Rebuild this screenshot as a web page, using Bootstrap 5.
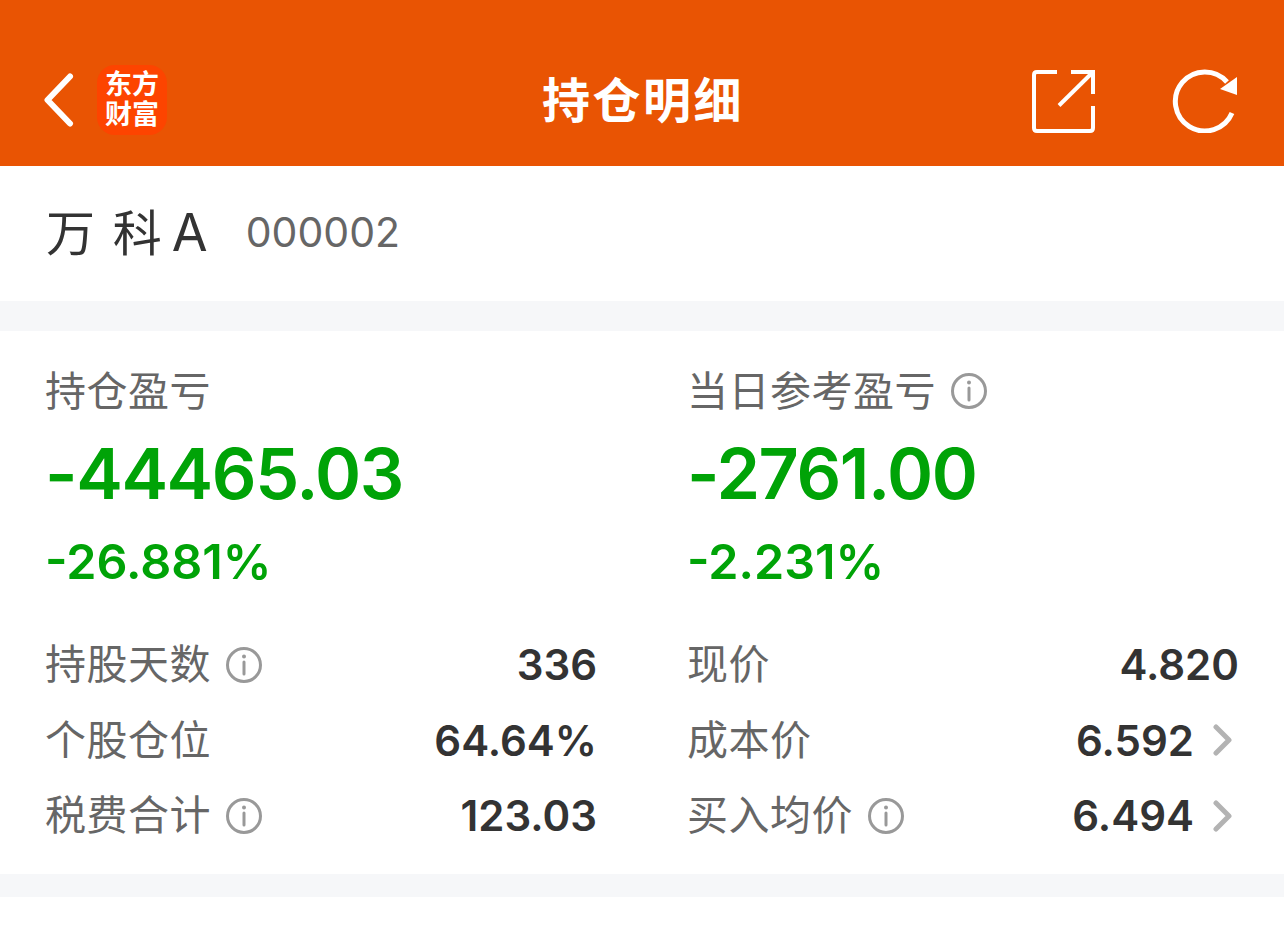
<!DOCTYPE html>
<html lang="zh-CN">
<head>
<meta charset="UTF-8">
<meta name="viewport" content="width=device-width, initial-scale=1.0">
<title>持仓明细</title>
<link href="https://cdn.jsdelivr.net/npm/bootstrap@5.3.0/dist/css/bootstrap.min.css" rel="stylesheet">
<style>
    body {
        background: #fff;
        font-family: Inter, "Noto Sans CJK SC", sans-serif;
        color: #333;
    }
    .top-bar {
        height: 166px;
        background: #e95403;
        padding: 36px 46px 0 44px;
        color: #fff;
    }
    .top-side { flex: 1 1 0; }
    .top-left { margin-bottom: 3px; }
    .top-title {
        font-size: 48px;
        line-height: 66px;
        font-weight: 700;
        letter-spacing: 2.5px;
        margin-left: 4px;
    }
    .logo-box {
        width: 70px;
        height: 70px;
        border-radius: 18px;
        background: #fd4400;
        margin-left: 23px;
        flex: none;
    }
    .logo-text {
        width: 54px;
        font-size: 27px;
        line-height: 30px;
        font-weight: 700;
        text-align: center;
    }
    .refresh-icon { margin-left: 77px; }
    .stock-row {
        height: 135px;
        padding: 0 46px 2px;
    }
    .stock-name { font-size: 49px; letter-spacing: 2px; color: #333; }
    .stock-letter { margin-left: 8px; font-size: 52px; }
    .stock-code { font-size: 41px; color: #666; margin-left: 36px; }
    .gap-band { background: #f6f7f9; }
    .gap-a { height: 30px; }
    .gap-b { height: 23px; }
    .pnl-block {
        height: 543px;
        padding: 34px 45px 0;
    }
    .pnl-left { width: 642px; flex: none; padding-right: 90px; }
    .pnl-right { flex: 1; }
    .pnl-label {
        font-size: 41px;
        line-height: 52px;
        letter-spacing: 0.5px;
        color: #666;
    }
    .pnl-value {
        font-size: 70px;
        line-height: 84px;
        font-weight: 600;
        color: #00a307;
        margin-top: 15px;
        letter-spacing: -1.4px;
    }
    .pnl-rate {
        font-size: 48.500px;
        line-height: 56px;
        font-weight: 600;
        color: #00a307;
        margin-top: 18px;
    }
    .stat-list { margin-top: 37px; }
    .stat-line {
        height: 75.500px;
        font-size: 41px;
        letter-spacing: 0.5px;
        color: #666;
    }
    .stat-num {
        font-size: 42px;
        font-weight: 600;
        letter-spacing: 0;
        color: #333;
    }
    .tip-icon { width: 36px; height: 36px; margin-left: 15px; flex: none; }
    .more-icon { width: 20px; height: 32px; margin: 0 6px 0 19px; flex: none; }
    .bottom-fill { height: 32px; }
</style>
</head>
<body>

<div class="top-bar d-flex align-items-center">
    <div class="top-side top-left d-flex align-items-center">
        <svg width="30" height="54" viewBox="0 0 30 54" fill="none" stroke="#fff" stroke-width="6" stroke-linecap="round" stroke-linejoin="round"><path d="M26 3.500 3.500 27 26 50.500"/></svg>
        <div class="logo-box d-flex align-items-center justify-content-center">
            <div class="logo-text">东方财富</div>
        </div>
    </div>
    <div class="top-title">持仓明细</div>
    <div class="top-side d-flex align-items-center justify-content-end">
        <svg width="64" height="64" viewBox="0 0 64 64" fill="none" stroke="#fff" stroke-width="4"><path d="M26 3H6Q3 3 3 6V59Q3 62 6 62H59Q62 62 62 59V37"/><path d="M40 3H62V25"/><path d="M28 36.500 62 3"/></svg>
        <svg class="refresh-icon" width="66" height="64" viewBox="0 0 66 64" fill="none"><path d="M60 44A29.500 29.500 0 1 1 55 13" stroke="#fff" stroke-width="5"/><path d="M65 8V26L48 20Z" fill="#fff"/></svg>
    </div>
</div>

<div class="stock-row d-flex align-items-center">
    <span class="stock-name">万 科<span class="stock-letter">A</span></span>
    <span class="stock-code">000002</span>
</div>

<div class="gap-band gap-a"></div>

<div class="pnl-block d-flex">
    <div class="pnl-left">
        <div class="pnl-label">持仓盈亏</div>
        <div class="pnl-value">-44465.03</div>
        <div class="pnl-rate">-26.881%</div>
        <div class="stat-list">
            <div class="stat-line d-flex align-items-center">
                <span>持股天数</span>
                <svg class="tip-icon" viewBox="0 0 36 36" fill="none" stroke="#999" stroke-width="3"><circle cx="18" cy="18" r="16.500"/><path d="M18 15V27" stroke-linecap="round"/><circle cx="18" cy="9.500" r="2" fill="#999" stroke="none"/></svg>
                <span class="stat-num ms-auto">336</span>
            </div>
            <div class="stat-line d-flex align-items-center">
                <span>个股仓位</span>
                <span class="stat-num ms-auto">64.64%</span>
            </div>
            <div class="stat-line d-flex align-items-center">
                <span>税费合计</span>
                <svg class="tip-icon" viewBox="0 0 36 36" fill="none" stroke="#999" stroke-width="3"><circle cx="18" cy="18" r="16.500"/><path d="M18 15V27" stroke-linecap="round"/><circle cx="18" cy="9.500" r="2" fill="#999" stroke="none"/></svg>
                <span class="stat-num ms-auto">123.03</span>
            </div>
        </div>
    </div>
    <div class="pnl-right">
        <div class="pnl-label d-flex align-items-center">
            <span>当日参考盈亏</span>
            <svg class="tip-icon" viewBox="0 0 36 36" fill="none" stroke="#999" stroke-width="3"><circle cx="18" cy="18" r="16.500"/><path d="M18 15V27" stroke-linecap="round"/><circle cx="18" cy="9.500" r="2" fill="#999" stroke="none"/></svg>
        </div>
        <div class="pnl-value">-2761.00</div>
        <div class="pnl-rate">-2.231%</div>
        <div class="stat-list">
            <div class="stat-line d-flex align-items-center">
                <span>现价</span>
                <span class="stat-num ms-auto">4.820</span>
            </div>
            <div class="stat-line d-flex align-items-center">
                <span>成本价</span>
                <span class="stat-num ms-auto">6.592</span>
                <svg class="more-icon" viewBox="0 0 20 32" fill="none" stroke="#b3b3b3" stroke-width="5" stroke-linecap="round" stroke-linejoin="round"><path d="M3 3 16 16 3 29"/></svg>
            </div>
            <div class="stat-line d-flex align-items-center">
                <span>买入均价</span>
                <svg class="tip-icon" viewBox="0 0 36 36" fill="none" stroke="#999" stroke-width="3"><circle cx="18" cy="18" r="16.500"/><path d="M18 15V27" stroke-linecap="round"/><circle cx="18" cy="9.500" r="2" fill="#999" stroke="none"/></svg>
                <span class="stat-num ms-auto">6.494</span>
                <svg class="more-icon" viewBox="0 0 20 32" fill="none" stroke="#b3b3b3" stroke-width="5" stroke-linecap="round" stroke-linejoin="round"><path d="M3 3 16 16 3 29"/></svg>
            </div>
        </div>
    </div>
</div>

<div class="gap-band gap-b"></div>
<div class="bottom-fill"></div>

<script src="https://cdn.jsdelivr.net/npm/bootstrap@5.3.0/dist/js/bootstrap.bundle.min.js"></script>
</body>
</html>
